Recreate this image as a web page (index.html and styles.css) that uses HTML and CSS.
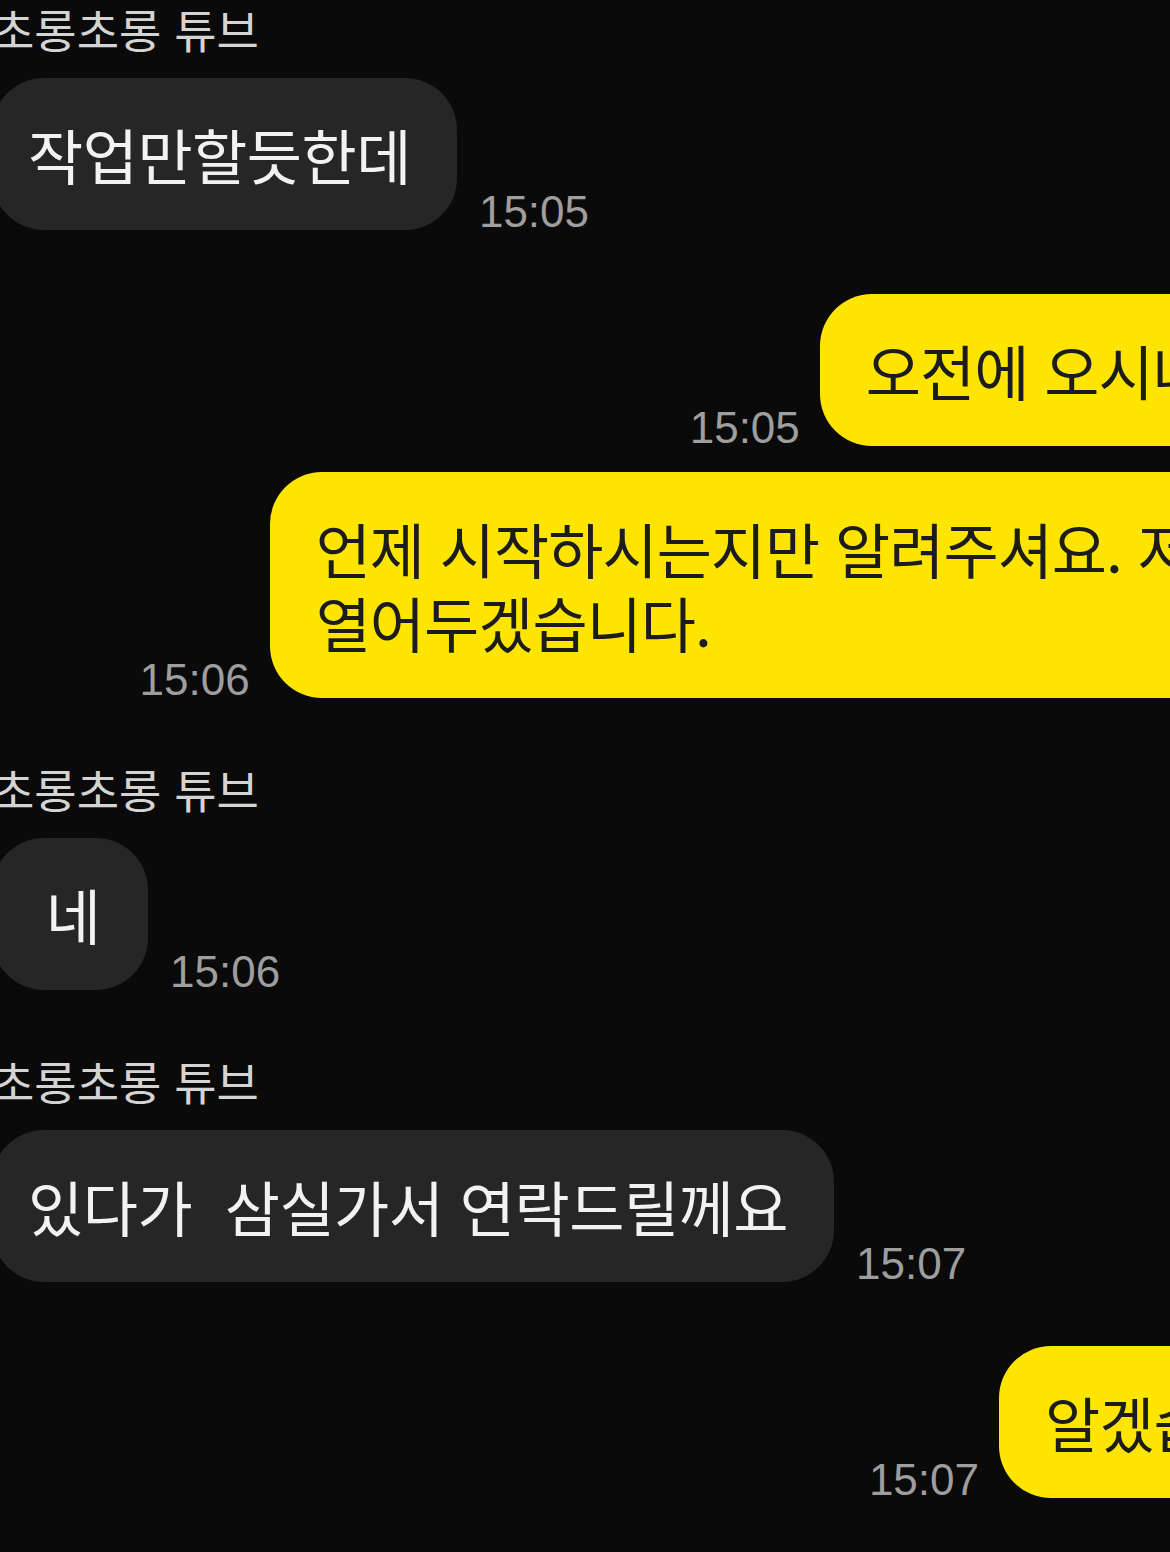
FILE: index.html
```html
<!DOCTYPE html>
<html lang="ko">

<head>
    <meta charset="UTF-8">
    <meta name="viewport" content="width=device-width, initial-scale=1.0">
    <title>채팅</title>
    <link rel="stylesheet" href="styles.css">
</head>

<body>
    <main class="chat">
        <section class="group incoming">
            <div class="name">초롱초롱 튜브</div>
            <div class="msg">
                <div class="bubble">작업만할듯한데</div>
                <span class="time">15:05</span>
            </div>
        </section>

        <section class="group outgoing">
            <div class="msg">
                <span class="time">15:05</span>
                <div class="bubble">오전에 오시나요??</div>
            </div>
            <div class="msg">
                <span class="time">15:06</span>
                <div class="bubble">언제 시작하시는지만 알려주셔요. 저희 문<br>열어두겠습니다.</div>
            </div>
        </section>

        <section class="group incoming">
            <div class="name">초롱초롱 튜브</div>
            <div class="msg">
                <div class="bubble short">네</div>
                <span class="time">15:06</span>
            </div>
        </section>

        <section class="group incoming">
            <div class="name">초롱초롱 튜브</div>
            <div class="msg">
                <div class="bubble">있다가&nbsp; 삼실가서 연락드릴께요</div>
                <span class="time">15:07</span>
            </div>
        </section>

        <section class="group outgoing">
            <div class="msg">
                <span class="time">15:07</span>
                <div class="bubble">알겠습니다</div>
            </div>
        </section>
    </main>
</body>

</html>
```

FILE: styles.css
```css
:root {
    --bg: #0a0a0a;
    --grey-bubble: #262626;
    --yellow: #fee500;
    --name: #d4d4d4;
    --time: #9e9e9e;
    --ink: #1c1c1c;
}

* {
    box-sizing: border-box;
    margin: 0;
    padding: 0;
}

body {
    background-color: var(--bg);
    overflow: hidden;
    font-family: 'Noto Sans CJK KR', 'Noto Sans', sans-serif;
}

.chat {
    display: flex;
    flex-direction: column;
    width: 1370px;
    margin-left: -8px;
    padding-top: 2px;
}

.group {
    display: flex;
    flex-direction: column;
    gap: 26px;
}

.group + .group {
    margin-top: 64px;
}

.group.incoming {
    gap: 0;
}

.name {
    font-size: 46px;
    line-height: 52px;
    color: var(--name);
    margin-bottom: 24px;
}

.msg {
    display: flex;
    align-items: flex-end;
    gap: 22px;
}

.outgoing .msg {
    justify-content: flex-end;
    gap: 20px;
}

.bubble {
    font-size: 60px;
    line-height: 74px;
    letter-spacing: -0.5px;
    padding: 39px 46px;
    border-radius: 52px;
    white-space: nowrap;
    min-width: 156px;
    text-align: center;
}

.incoming .bubble {
    background-color: var(--grey-bubble);
    color: #f2f2f2;
    padding-left: 36px;
}

.incoming .bubble.short {
    padding-left: 52px;
}

.outgoing .bubble {
    background-color: var(--yellow);
    color: var(--ink);
    text-align: left;
    letter-spacing: -1px;
}

.time {
    font-family: 'Liberation Sans', Arial, sans-serif;
    font-size: 44px;
    line-height: 36px;
    color: var(--time);
}
```
